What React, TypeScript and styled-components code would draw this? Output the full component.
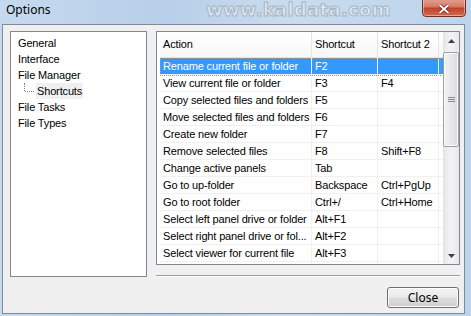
import React from 'react';
import styled, { createGlobalStyle } from 'styled-components';

const GlobalStyle = createGlobalStyle`
  html, body {
    margin: 0;
    padding: 0;
    background: #bcd3ea;
  }
  * {
    box-sizing: border-box;
  }
`;

const Window = styled.div`
  width: 471px;
  height: 316px;
  display: flex;
  flex-direction: column;
  background: linear-gradient(to right, #c6daef 0%, #b7cfe8 35%, #c9dcef 60%, #bdd4ec 100%);
  font-family: 'Liberation Sans', Arial, sans-serif;
  font-size: 11px;
  letter-spacing: -0.15px;
  color: #000;
  overflow: hidden;
`;

const TitleBar = styled.div`
  height: 24px;
  flex: none;
  display: flex;
  align-items: flex-start;
  position: relative;
`;

const Title = styled.span`
  font-family: 'Noto Sans', 'Open Sans', sans-serif;
  font-size: 12px;
  letter-spacing: 0;
  line-height: 16px;
  margin: 2px 0 0 6px;
  color: #000;
`;

const Watermark = styled.span`
  position: absolute;
  left: 206px;
  top: 0px;
  font-family: 'DejaVu Sans', sans-serif;
  font-weight: bold;
  font-size: 18px;
  line-height: 20px;
  letter-spacing: 0.3px;
  color: #dfe8f2;
  -webkit-text-stroke: 1px #a7b5c4;
`;

const CloseCaption = styled.div`
  position: absolute;
  left: 422px;
  top: -2px;
  width: 44px;
  height: 19px;
  border: 1px solid #6d3027;
  border-radius: 0 0 4px 4px;
  background: linear-gradient(#e2a391 0%, #d67a66 45%, #c2432d 55%, #cf6a4f 100%);
  box-shadow: inset 0 0 0 1px rgba(255, 220, 210, 0.5);
  display: flex;
  align-items: center;
  justify-content: center;
  padding-top: 2px;
`;

const Frame = styled.div`
  flex: 1;
  padding: 0 7px 2px 2px;
  display: flex;
`;

const Client = styled.div`
  flex: 1;
  background: #f0f0f0;
  border: 1px solid #7d8a9c;
  display: flex;
  gap: 9px;
  padding: 6px 4px 0 7px;
`;

const Tree = styled.div`
  width: 137px;
  height: 246px;
  flex: none;
  background: #fff;
  border: 1px solid #828790;
  padding: 3px 0 0 6px;
`;

const TreeItem = styled.div<{ $child?: boolean; $active?: boolean }>`
  height: 16px;
  line-height: 16px;
  position: relative;
  padding-left: ${(p) => (p.$child ? '19px' : '0')};

  span {
    display: inline-block;
    padding: 0 1px;
    background: ${(p) => (p.$active ? '#f0f0f0' : 'transparent')};
  }

  ${(p) =>
    p.$child &&
    `
    &::before {
      content: '';
      position: absolute;
      left: 7px;
      top: 0;
      height: 8px;
      border-left: 1px dotted #808080;
    }
    &::after {
      content: '';
      position: absolute;
      left: 8px;
      top: 8px;
      width: 9px;
      border-top: 1px dotted #808080;
    }
  `}
`;

const RightPane = styled.div`
  width: 304px;
  flex: none;
  display: flex;
  flex-direction: column;
`;

const GridBox = styled.div`
  height: 234px;
  border: 1px solid #828790;
  background: #fff;
  display: flex;
  padding-left: 3px;
`;

const Table = styled.div`
  width: 283px;
  display: flex;
  flex-direction: column;
  overflow: hidden;
`;

const HeaderRow = styled.div`
  height: 26px;
  flex: none;
  display: flex;
  border-bottom: 1px solid #e5e5e5;
  background: linear-gradient(#ffffff, #f7f7f7);
`;

const Row = styled.div<{ $selected?: boolean }>`
  height: 17px;
  flex: none;
  display: flex;
  border-bottom: 1px solid #f0f0f0;
  position: relative;
  background: ${(p) => (p.$selected ? '#3399ff' : 'transparent')};
  color: ${(p) => (p.$selected ? '#fff' : '#000')};

  ${(p) =>
    p.$selected &&
    `
    &::after {
      content: '';
      position: absolute;
      left: 0;
      top: 0;
      width: 279px;
      height: 16px;
      border: 1px dotted #d98a3a;
    }
  `}
`;

const Cell = styled.div<{ $w: number; $head?: boolean }>`
  width: ${(p) => p.$w}px;
  flex: none;
  padding-left: 3px;
  border-right: 1px solid ${(p) => (p.$head ? '#e5e5e5' : '#f0f0f0')};
  line-height: ${(p) => (p.$head ? '25px' : '16px')};
  white-space: nowrap;
  overflow: hidden;
`;

const ScrollBar = styled.div`
  width: 16px;
  margin-left: auto;
  display: flex;
  flex-direction: column;
  background: linear-gradient(to right, #e3e3e3, #f2f2f2 40%, #f2f2f2 60%, #e8e8e8);
`;

const ArrowButton = styled.div`
  height: 17px;
  flex: none;
  display: flex;
  align-items: center;
  justify-content: center;
`;

const Thumb = styled.div`
  margin: 3px 0 0 0;
  height: 95px;
  border: 1px solid #9e9e9e;
  border-radius: 2px;
  background: linear-gradient(to right, #f2f2f2, #e8e8e8 50%, #d9d9d9);
  box-shadow: inset 0 0 0 1px #fbfbfb;
  display: flex;
  align-items: center;
  justify-content: center;
`;

const Track = styled.div`
  flex: 1;
`;

const Separator = styled.div`
  margin-top: 10px;
  height: 2px;
  border-top: 1px solid #a0a0a0;
  border-bottom: 1px solid #ffffff;
`;

const ButtonRow = styled.div`
  display: flex;
  justify-content: flex-end;
  margin-top: 10px;
  padding-right: 1px;
`;

const Button = styled.button`
  width: 72px;
  height: 21px;
  border: 1px solid #707070;
  border-radius: 3px;
  background: linear-gradient(#f2f2f2 0%, #ebebeb 48%, #dddddd 52%, #cfcfcf 100%);
  box-shadow: inset 0 0 0 1px #fcfcfc;
  font-family: 'Noto Sans', 'Open Sans', sans-serif;
  font-size: 12px;
  line-height: 17px;
  padding: 0;
  color: #000;
`;

const rows: [string, string, string][] = [
  ['Rename current file or folder', 'F2', ''],
  ['View current file or folder', 'F3', 'F4'],
  ['Copy selected files and folders', 'F5', ''],
  ['Move selected files and folders', 'F6', ''],
  ['Create new folder', 'F7', ''],
  ['Remove selected files', 'F8', 'Shift+F8'],
  ['Change active panels', 'Tab', ''],
  ['Go to up-folder', 'Backspace', 'Ctrl+PgUp'],
  ['Go to root folder', 'Ctrl+/', 'Ctrl+Home'],
  ['Select left panel drive or folder', 'Alt+F1', ''],
  ['Select right panel drive or fol...', 'Alt+F2', ''],
  ['Select viewer for current file', 'Alt+F3', ''],
  ['', '', ''],
];

const widths = [152, 66, 61];

const App = () => {
  return (
    <>
      <GlobalStyle />
      <Window>
        <TitleBar>
          <Title>Options</Title>
          <Watermark>www.kaldata.com</Watermark>
          <CloseCaption>
            <svg width="12" height="10" viewBox="0 0 12 10">
              <path d="M1.5 1 L10.5 9 M10.5 1 L1.5 9" stroke="#5a2018" strokeWidth="3.2" />
              <path d="M1.5 1 L10.5 9 M10.5 1 L1.5 9" stroke="#fff" strokeWidth="1.8" />
            </svg>
          </CloseCaption>
        </TitleBar>
        <Frame>
          <Client>
            <Tree>
              <TreeItem><span>General</span></TreeItem>
              <TreeItem><span>Interface</span></TreeItem>
              <TreeItem><span>File Manager</span></TreeItem>
              <TreeItem $child $active><span>Shortcuts</span></TreeItem>
              <TreeItem><span>File Tasks</span></TreeItem>
              <TreeItem><span>File Types</span></TreeItem>
            </Tree>
            <RightPane>
              <GridBox>
                <Table>
                  <HeaderRow>
                    <Cell $head $w={widths[0]}>Action</Cell>
                    <Cell $head $w={widths[1]}>Shortcut</Cell>
                    <Cell $head $w={widths[2]}>Shortcut 2</Cell>
                  </HeaderRow>
                  {rows.map((r, i) => (
                    <Row key={i} $selected={i === 0}>
                      <Cell $w={widths[0]}>{r[0]}</Cell>
                      <Cell $w={widths[1]}>{r[1]}</Cell>
                      <Cell $w={widths[2]}>{r[2]}</Cell>
                    </Row>
                  ))}
                </Table>
                <ScrollBar>
                  <ArrowButton>
                    <svg width="7" height="4" viewBox="0 0 7 4">
                      <path d="M0 4 L3.5 0 L7 4 Z" fill="#404040" />
                    </svg>
                  </ArrowButton>
                  <Thumb>
                    <svg width="7" height="6" viewBox="0 0 7 6">
                      <path d="M0 0.5 H7 M0 2.5 H7 M0 4.5 H7" stroke="#8a8a8a" strokeWidth="1" />
                    </svg>
                  </Thumb>
                  <Track />
                  <ArrowButton>
                    <svg width="7" height="4" viewBox="0 0 7 4">
                      <path d="M0 0 L7 0 L3.5 4 Z" fill="#404040" />
                    </svg>
                  </ArrowButton>
                </ScrollBar>
              </GridBox>
              <Separator />
              <ButtonRow>
                <Button>Close</Button>
              </ButtonRow>
            </RightPane>
          </Client>
        </Frame>
      </Window>
    </>
  );
};

export default App;
